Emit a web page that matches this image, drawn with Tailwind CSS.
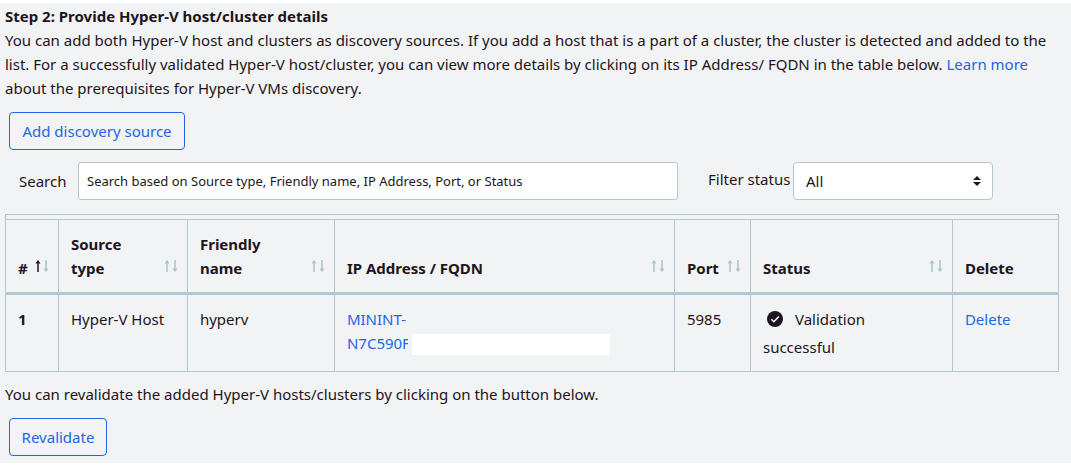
<!DOCTYPE html>
<html lang="en">
<head>
<meta charset="utf-8">
<meta name="viewport" content="width=device-width, initial-scale=1">
<title>Hyper-V discovery sources</title>
<script src="https://cdn.jsdelivr.net/npm/@tailwindcss/browser@4"></script>
</head>
<body class="bg-white py-[3px] font-['Segoe_UI','Noto_Sans',sans-serif] text-[15px] leading-6 text-[#1d1520]">
<svg class="hidden" aria-hidden="true">
  <symbol id="up" viewBox="0 0 8 12"><path d="M4 12V1" fill="none" stroke="currentColor" stroke-width="1.5"/><path d="M1.5 3.5 4 0 6.5 3.5z" fill="currentColor"/></symbol>
  <symbol id="down" viewBox="0 0 8 12"><path d="M4 0V11" fill="none" stroke="currentColor" stroke-width="1.5"/><path d="M1.5 8.5 4 12 6.5 8.5z" fill="currentColor"/></symbol>
</svg>
<main class="bg-[#f2f3f4] pt-px pb-[7px] pl-[5px] pr-3">
  <h2 class="font-bold">Step 2: Provide Hyper-V host/cluster details</h2>
  <p>You can add both Hyper-V host and clusters as discovery sources. If you add a host that is a part of a cluster, the cluster is detected and added to the list. For a successfully validated Hyper-V host/cluster, you can view more details by clicking on its IP Address/ FQDN in the table below. <a href="#" class="text-[#2266e3]">Learn more</a> about the prerequisites for Hyper-V VMs discovery.</p>
  <button type="button" class="mt-3 ml-1 block h-[38px] w-44 rounded border border-[#2266e3] text-[#2266e3]">Add discovery source</button>

  <div class="mt-3 flex items-center pl-[14px] pr-[66px]">
    <label for="search" class="w-[59px] shrink-0">Search</label>
    <input id="search" type="text" placeholder="Search based on Source type, Friendly name, IP Address, Port, or Status" class="h-[38px] min-w-0 flex-1 rounded-[3px] border border-[#b0c8d2] bg-white px-2 text-[13px] placeholder:text-[#1d1520] placeholder:opacity-100">
    <label for="filter" class="ml-[30px] w-[85px] shrink-0 pb-1 whitespace-nowrap">Filter status</label>
    <div class="relative w-[200px] shrink-0">
      <select id="filter" class="block h-[38px] w-full appearance-none rounded border border-[#b0c8d2] bg-white px-3"><option>All</option></select>
      <svg class="pointer-events-none absolute top-[14px] right-3 h-[10px] w-2" viewBox="0 0 8 10" fill="currentColor" aria-hidden="true"><path d="M4 0 8 4H0zM4 10 0 6H8z"/></svg>
    </div>
  </div>

  <div class="mt-[14px] h-[5px] border-x border-t border-[#b0c8d2]"></div>
  <table class="w-full table-fixed border-collapse text-left">
    <colgroup>
      <col class="w-[5.03%]"><col class="w-[12.25%]"><col class="w-[13.96%]"><col class="w-[32.29%]"><col class="w-[7.22%]"><col class="w-[19.18%]"><col class="w-[10.07%]">
    </colgroup>
    <thead>
      <tr class="h-[74px] align-bottom">
        <th scope="col" class="border border-b-[3px] border-[#b0c8d2] pb-3 pl-3 pr-2"><div class="flex items-end justify-between">#<span class="mb-2 flex text-[#a9c5cd]"><svg class="h-3 w-2 text-[#1d1520]"><use href="#up"/></svg><svg class="h-3 w-2"><use href="#down"/></svg></span></div></th>
        <th scope="col" class="border border-b-[3px] border-[#b0c8d2] pb-3 pl-3 pr-2"><div class="flex items-end justify-between"><span>Source<br>type</span><span class="mb-2 flex text-[#a9c5cd]"><svg class="h-3 w-2"><use href="#up"/></svg><svg class="h-3 w-2"><use href="#down"/></svg></span></div></th>
        <th scope="col" class="border border-b-[3px] border-[#b0c8d2] pb-3 pl-3 pr-2"><div class="flex items-end justify-between"><span>Friendly<br>name</span><span class="mb-2 flex text-[#a9c5cd]"><svg class="h-3 w-2"><use href="#up"/></svg><svg class="h-3 w-2"><use href="#down"/></svg></span></div></th>
        <th scope="col" class="border border-b-[3px] border-[#b0c8d2] pb-3 pl-3 pr-2"><div class="flex items-end justify-between">IP Address / FQDN<span class="mb-2 flex text-[#a9c5cd]"><svg class="h-3 w-2"><use href="#up"/></svg><svg class="h-3 w-2"><use href="#down"/></svg></span></div></th>
        <th scope="col" class="border border-b-[3px] border-[#b0c8d2] pb-3 pl-3 pr-2"><div class="flex items-end justify-between">Port<span class="mb-2 flex text-[#a9c5cd]"><svg class="h-3 w-2"><use href="#up"/></svg><svg class="h-3 w-2"><use href="#down"/></svg></span></div></th>
        <th scope="col" class="border border-b-[3px] border-[#b0c8d2] pb-3 pl-3 pr-2"><div class="flex items-end justify-between">Status<span class="mb-2 flex text-[#a9c5cd]"><svg class="h-3 w-2"><use href="#up"/></svg><svg class="h-3 w-2"><use href="#down"/></svg></span></div></th>
        <th scope="col" class="border border-b-[3px] border-[#b0c8d2] pb-3 pl-3 pr-2">Delete</th>
      </tr>
    </thead>
    <tbody>
      <tr class="h-[78px] align-top">
        <th scope="row" class="border border-[#b0c8d2] px-3 pt-3">1</th>
        <td class="border border-[#b0c8d2] pt-3 pl-3 whitespace-nowrap">Hyper-V Host</td>
        <td class="border border-[#b0c8d2] px-3 pt-3">hyperv</td>
        <td class="border border-[#b0c8d2] px-3 pt-3"><a href="#" class="block text-[#2266e3]">MININT-<span class="flex items-center"><span class="w-[61px] overflow-hidden">N7C590F</span><span class="mt-[2px] ml-1 h-[21px] w-[198px] bg-white"></span></span></a></td>
        <td class="border border-[#b0c8d2] px-3 pt-3">5985</td>
        <td class="border border-[#b0c8d2] px-3 pt-3"><div class="flex items-center pl-1"><svg class="mr-3 h-4 w-4" viewBox="0 0 16 16" aria-hidden="true"><circle cx="8" cy="8" r="8" fill="currentColor"/><path d="M4.3 8.3 6.9 10.8 11.8 5.6" fill="none" stroke="#fff" stroke-width="1.4"/></svg>Validation</div><div class="pt-1">successful</div></td>
        <td class="border border-[#b0c8d2] px-3 pt-3"><a href="#" class="text-[#2266e3]">Delete</a></td>
      </tr>
    </tbody>
  </table>

  <p class="mt-[10px]">You can revalidate the added Hyper-V hosts/clusters by clicking on the button below.</p>
  <button type="button" class="mt-3 ml-1 block h-[38px] w-[98px] rounded border border-[#2266e3] text-[#2266e3]">Revalidate</button>
</main>
</body>
</html>
